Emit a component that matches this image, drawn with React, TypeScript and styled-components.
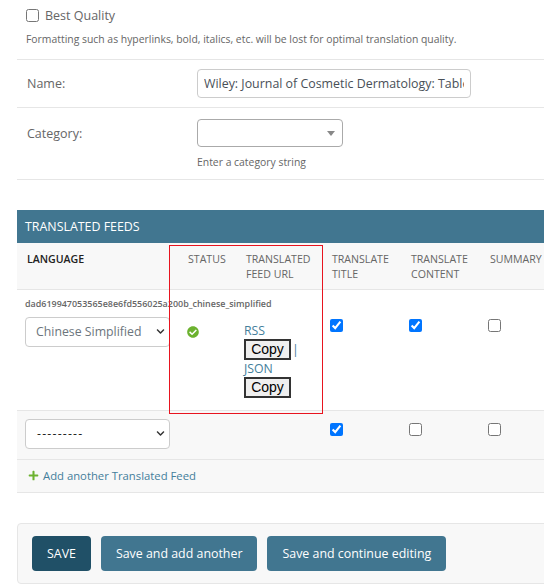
import React from "react";
import styled, { createGlobalStyle } from "styled-components";
import { FaCheckCircle, FaPlus, FaChevronDown } from "react-icons/fa";

const GlobalStyle = createGlobalStyle`
	html, body {
		margin: 0;
		padding: 0;
		background: #fff;
		overflow: hidden;
	}
	body {
		width: 544px;
		height: 587px;
		font-family: "Open Sans", "Noto Sans", sans-serif;
		color: #666;
	}
	* {
		box-sizing: border-box;
	}
`;

interface IFeedRow {
	language: string;
	rowId?: string;
	status?: boolean;
	title: boolean;
	content: boolean;
	summary: boolean;
}

const FEEDS: IFeedRow[] = [
	{
		language: "Chinese Simplified",
		rowId: "dad619947053565e8e6fd556025a200b_chinese_simplified",
		status: true,
		title: true,
		content: true,
		summary: false,
	},
	{ language: "---------", title: true, content: false, summary: false },
];

const Check = ({ checked }: { checked: boolean }) => <Checkbox type="checkbox" defaultChecked={checked} />;

export default function App() {
	return (
		<Page>
			<GlobalStyle />
			<Form>
				<QualityRow>
					<QualityLabel>
						<Checkbox type="checkbox" />
						<span>Best Quality</span>
					</QualityLabel>
					<Help>Formatting such as hyperlinks, bold, italics, etc. will be lost for optimal translation quality.</Help>
				</QualityRow>
				<FieldRow>
					<FieldLabel>Name:</FieldLabel>
					<NameInput defaultValue="Wiley: Journal of Cosmetic Dermatology: Table of Contents" />
				</FieldRow>
				<CategoryRow>
					<FieldLabel>Category:</FieldLabel>
					<div>
						<CategorySelect>
							<Triangle />
						</CategorySelect>
						<CategoryHelp>Enter a category string</CategoryHelp>
					</div>
				</CategoryRow>
			</Form>

			<Panel>
				<PanelTitle>TRANSLATED FEEDS</PanelTitle>
				<FeedTable>
					<colgroup>
						<col width={163} />
						<col width={58} />
						<col width={86} />
						<col width={79} />
						<col width={79} />
						<col width={79} />
					</colgroup>
					<thead>
						<tr>
							<LanguageHead>Language</LanguageHead>
							<HeadCell>Status</HeadCell>
							<HeadCell>Translated feed url</HeadCell>
							<HeadCell>Translate title</HeadCell>
							<HeadCell>Translate content</HeadCell>
							<HeadCell>Summary</HeadCell>
						</tr>
					</thead>
					<tbody>
						{FEEDS.map((feed) => (
							<FeedRow key={feed.language} $saved={!!feed.rowId}>
								<LanguageCell>
									{feed.rowId && <RowId>{feed.rowId}</RowId>}
									<LanguageSelect $saved={!!feed.rowId}>
										<span>{feed.language}</span>
										<FaChevronDown />
									</LanguageSelect>
								</LanguageCell>
								<StatusCell $saved={!!feed.rowId}>
									{feed.status && <StatusIcon />}
								</StatusCell>
								<UrlCell $saved={!!feed.rowId}>
									{feed.rowId && (
										<>
											<FeedLink>RSS</FeedLink>
											<CopyLine>
												<CopyButton>Copy</CopyButton>
												<Divider>|</Divider>
											</CopyLine>
											<FeedLink>JSON</FeedLink>
											<CopyLine>
												<CopyButton>Copy</CopyButton>
											</CopyLine>
										</>
									)}
								</UrlCell>
								<CheckCell $saved={!!feed.rowId}><Check checked={feed.title} /></CheckCell>
								<CheckCell $saved={!!feed.rowId}><Check checked={feed.content} /></CheckCell>
								<CheckCell $saved={!!feed.rowId}><Check checked={feed.summary} /></CheckCell>
							</FeedRow>
						))}
					</tbody>
				</FeedTable>
				<AddRow>
					<FaPlus />
					<span>Add another Translated Feed</span>
				</AddRow>
				<Highlight />
			</Panel>

			<SubmitBar>
				<SaveButton $primary>SAVE</SaveButton>
				<SaveButton>Save and add another</SaveButton>
				<SaveButton>Save and continue editing</SaveButton>
			</SubmitBar>
		</Page>
	);
}

const Page = styled.div`
	width: 544px;
	height: 587px;
	overflow: hidden;
	padding-left: 17px;
`;
const Form = styled.div`
	width: 527px;
`;
const QualityRow = styled.div`
	height: 60px;
	padding: 7px 0 0 9px;
	border-bottom: 1px solid #e6e6e6;
`;
const QualityLabel = styled.label`
	display: flex;
	align-items: center;
	gap: 6px;
	font-size: 12.5px;
	line-height: 17px;
`;
const Checkbox = styled.input`
	width: 13px;
	height: 13px;
	margin: 0;
`;
const Help = styled.p`
	margin: 8px 0 0;
	font-size: 10.4px;
	line-height: 15px;
	white-space: nowrap;
`;
const FieldRow = styled.div`
	height: 48px;
	display: flex;
	align-items: center;
	padding-left: 10px;
	border-bottom: 1px solid #e6e6e6;
`;
const CategoryRow = styled.div`
	height: 72px;
	display: flex;
	padding: 11px 0 0 10px;
	border-bottom: 1px solid #e6e6e6;
`;
const FieldLabel = styled.div`
	width: 170px;
	font-size: 12.5px;
	line-height: 30px;
`;
const NameInput = styled.input`
	width: 274px;
	height: 29px;
	padding: 0 6px;
	border: 1px solid #ccc;
	border-radius: 4px;
	font: 12.4px "Open Sans", sans-serif;
	color: #495057;
`;
const CategorySelect = styled.div`
	width: 146px;
	height: 28px;
	display: flex;
	align-items: center;
	justify-content: flex-end;
	padding-right: 7px;
	border: 1px solid #aaa;
	border-radius: 4px;
	background: #fff;
`;
const Triangle = styled.span`
	width: 0;
	height: 0;
	border-style: solid;
	border-width: 5px 4px 0;
	border-color: #888 transparent transparent;
`;
const CategoryHelp = styled.p`
	margin: 8px 0 0;
	font-size: 10.4px;
	line-height: 14px;
`;
const Panel = styled.section`
	position: relative;
	width: 560px;
	margin-top: 30px;
`;
const PanelTitle = styled.h2`
	height: 33px;
	margin: 0;
	padding: 0 8px;
	background: #417690;
	color: #fff;
	font-size: 12.4px;
	font-weight: 400;
	line-height: 33px;
`;
const FeedTable = styled.table`
	width: 544px;
	table-layout: fixed;
	border-collapse: collapse;
`;
const HeadCell = styled.th`
	height: 46px;
	padding: 9px 4px 0 8px;
	background: #f8f8f8;
	border-bottom: 1px solid #e6e6e6;
	color: #666;
	font-size: 10.6px;
	font-weight: 400;
	line-height: 15px;
	text-align: left;
	text-transform: uppercase;
	vertical-align: top;
`;
const LanguageHead = styled(HeadCell)`
	padding-left: 10px;
	color: #222;
	font-weight: 600;
`;
const FeedRow = styled.tr<{ $saved: boolean }>`
	background: ${({ $saved }) => ($saved ? "#fff" : "#f8f8f8")};
	border-bottom: 1px solid #e6e6e6;
`;
const LanguageCell = styled.td`
	padding: 8px 0 0 8px;
	vertical-align: top;
`;
const RowId = styled.p`
	margin: 0 0 7px;
	font-size: 8.95px;
	font-weight: 600;
	line-height: 12px;
	white-space: nowrap;
`;
const LanguageSelect = styled.div<{ $saved: boolean }>`
	width: 145px;
	height: 30px;
	margin-bottom: 10px;
	display: flex;
	align-items: center;
	justify-content: space-between;
	padding: 0 4px 0 ${({ $saved }) => ($saved ? "10px" : "11px")};
	border: 1px solid #ccc;
	border-radius: 4px;
	background: #fff;
	color: ${({ $saved }) => ($saved ? "#6c757d" : "#222")};
	font-size: 12.3px;
	letter-spacing: ${({ $saved }) => ($saved ? "0" : "1.2px")};
	svg {
		width: 9px;
		height: 9px;
		color: #333;
	}
`;
const BodyCell = styled.td<{ $saved: boolean }>`
	vertical-align: top;
	padding-top: ${({ $saved }) => ($saved ? "25px" : "8px")};
`;
const StatusCell = styled(BodyCell)`
	padding-left: 7px;
	padding-top: ${({ $saved }) => ($saved ? "36px" : "8px")};
`;
const StatusIcon = styled(FaCheckCircle)`
	display: block;
	width: 12px;
	height: 12px;
	color: #6cb22f;
`;
const UrlCell = styled(BodyCell)`
	padding: ${({ $saved }) => ($saved ? "32px 0 12px 6px" : "0")};
`;
const CheckCell = styled(BodyCell)`
	padding-left: 6px;
`;
const FeedLink = styled.div`
	color: #447e9b;
	font-size: 12.3px;
	line-height: 17px;
`;
const CopyLine = styled.div`
	display: flex;
	align-items: center;
	gap: 1px;
	height: 21px;
`;
const CopyButton = styled.button`
	width: 47px;
	height: 21px;
	padding: 0;
	border: 2px solid #333;
	border-radius: 0;
	background: #efefef;
	color: #000;
	font: 14px "Liberation Sans", Arial, sans-serif;
`;
const Divider = styled.span`
	color: #447e9b;
	font-size: 12.5px;
`;
const AddRow = styled.div`
	width: 544px;
	height: 33px;
	display: flex;
	align-items: center;
	gap: 4px;
	padding-left: 11px;
	background: #f8f8f8;
	border-bottom: 1px solid #e6e6e6;
	color: #447e9b;
	font-size: 11.3px;
	svg {
		width: 11px;
		height: 11px;
		color: #6cb22f;
	}
`;
const Highlight = styled.div`
	position: absolute;
	left: 152px;
	top: 35px;
	width: 154px;
	height: 169px;
	border: 1px solid #e8141f;
	pointer-events: none;
`;
const SubmitBar = styled.div`
	width: 560px;
	height: 61px;
	margin-top: 30px;
	display: flex;
	gap: 10px;
	padding: 12px 14px;
	background: #f8f8f8;
	border: 1px solid #e6e6e6;
	border-radius: 4px;
`;
const SaveButton = styled.button<{ $primary?: boolean }>`
	height: 35px;
	padding: 0 15px;
	border: 0;
	border-radius: 4px;
	background: ${({ $primary }) => ($primary ? "#205067" : "#417690")};
	color: #fff;
	font: 12.4px "Open Sans", sans-serif;
`;
